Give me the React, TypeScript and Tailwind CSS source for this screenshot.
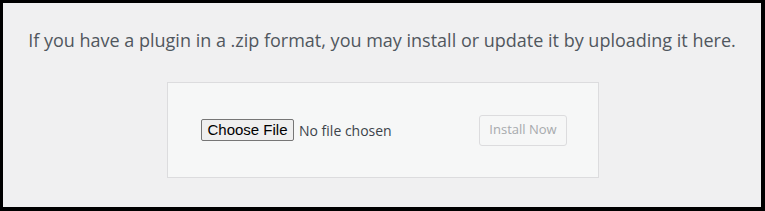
export default function App() {
  return (
    <div className="w-[765px] h-[211px] border-black border-t-[3px] border-l-[3px] border-r-[4px] border-b-[4px] bg-[#f0f0f1] font-['Open_Sans',sans-serif]">
      <p className="pt-[25px] text-center text-[18px] leading-[24px] text-[#50575e]">
        If you have a plugin in a .zip format, you may install or update it by uploading it here.
      </p>
      <div className="ml-[164px] mt-[30px] w-[432px] h-[96px] border border-[#dcdcde] bg-[#f6f7f7] flex items-center justify-between pl-[33px] pr-[31px]">
        <div className="flex items-center">
          <span className="h-[22px] w-[93px] flex items-center justify-center rounded-[2px] border border-[#767676] bg-[#efefef] text-[15px] text-black font-['Liberation_Sans',sans-serif]">
            Choose File
          </span>
          <span className="ml-[5px] text-[14px] text-[#3c434a]">No file chosen</span>
        </div>
        <span className="h-[31px] w-[88px] flex items-center justify-center rounded-[3px] border border-[#dcdcde] bg-[#f6f7f7] text-[13px] text-[#a7aaad]">
          Install Now
        </span>
      </div>
    </div>
  );
}
